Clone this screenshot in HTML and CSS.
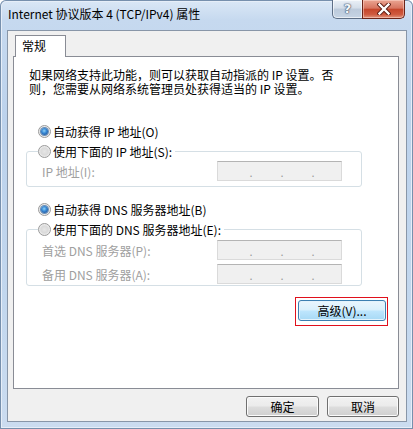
FILE: index.html
```html
<!DOCTYPE html>
<html lang="zh-CN">
<head>
<meta charset="utf-8">
<title>Internet 协议版本 4 (TCP/IPv4) 属性</title>
<link rel="stylesheet" href="styles.css">
</head>
<body>
<div class="window">
  <div class="titlebar">
    <div class="title">Internet 协议版本 4 (TCP/IPv4) 属性</div>
    <div class="caption-buttons">
      <div class="cbtn help"><span>?</span></div>
      <div class="cbtn close">
        <svg width="14" height="12" viewBox="0 0 14 12">
          <path d="M2.5 1.5 L11.5 10.5 M11.5 1.5 L2.5 10.5" stroke="#5a1a10" stroke-width="4.2" stroke-linecap="square" fill="none"/>
          <path d="M2.5 1.5 L11.5 10.5 M11.5 1.5 L2.5 10.5" stroke="#ffffff" stroke-width="2.4" stroke-linecap="square" fill="none"/>
        </svg>
      </div>
    </div>
  </div>
  <div class="client">
    <div class="tabs"><div class="tab">常规</div></div>
    <div class="panel">
      <p class="intro">如果网络支持此功能，则可以获取自动指派的 IP 设置。否<br>则，您需要从网络系统管理员处获得适当的 IP 设置。</p>

      <div class="radio-row row-auto-ip"><span class="radio checked"></span><span>自动获得 IP 地址(O)</span></div>
      <fieldset class="group group-ip">
        <legend><span class="radio"></span><span>使用下面的 IP 地址(S):</span></legend>
        <div class="field-row first"><span class="flabel">IP 地址(I):</span><div class="ipbox"><span class="dot">.</span><span class="dot">.</span><span class="dot">.</span></div></div>
      </fieldset>

      <div class="radio-row row-auto-dns"><span class="radio checked"></span><span>自动获得 DNS 服务器地址(B)</span></div>
      <fieldset class="group group-dns">
        <legend><span class="radio"></span><span>使用下面的 DNS 服务器地址(E):</span></legend>
        <div class="field-row first"><span class="flabel">首选 DNS 服务器(P):</span><div class="ipbox"><span class="dot">.</span><span class="dot">.</span><span class="dot">.</span></div></div>
        <div class="field-row second"><span class="flabel">备用 DNS 服务器(A):</span><div class="ipbox"><span class="dot">.</span><span class="dot">.</span><span class="dot">.</span></div></div>
      </fieldset>

      <div class="adv-row"><div class="highlight"><div class="btn btn-default adv">高级(V)...</div></div></div>
    </div>
    <div class="footer">
      <div class="btn ok">确定</div>
      <div class="btn cancel">取消</div>
    </div>
  </div>
</div>
</body>
</html>
```
FILE: styles.css
```css
* { box-sizing: border-box; }
html, body { margin: 0; padding: 0; }
body {
  width: 413px;
  height: 429px;
  overflow: hidden;
  background: #ffffff;
  font-family: "Noto Sans CJK SC", "Noto Sans", sans-serif;
  font-size: 12px;
  color: #000;
}
.window {
  width: 413px;
  height: 429px;
  padding: 0 6px 7px 7px;
  border-radius: 6px 6px 0 0;
  background: linear-gradient(180deg, #dbe8f6 0px, #c6d9ef 20px, #bcd2ec 120px, #c2d7ee 300px, #cbdcf0 429px);
  box-shadow: inset 0 0 0 1px #7790ad, inset 0 0 0 2px #e6eef8;
  display: flex;
  flex-direction: column;
}
.titlebar {
  height: 30px;
  display: flex;
  justify-content: space-between;
  align-items: flex-start;
}
.title {
  margin-left: 1px;
  padding-top: 6px;
  line-height: 16px;
  font-size: 12px;
  color: #000;
}
.caption-buttons {
  display: flex;
  margin-right: 2px;
}
.cbtn {
  height: 19px;
  display: flex;
  align-items: center;
  justify-content: center;
  border: 1px solid #5e6f86;
  border-top: none;
}
.help {
  width: 30px;
  border-right: none;
  border-radius: 0 0 0 5px;
  background: linear-gradient(180deg, #eaf0f7 0%, #d4dee9 45%, #bccadb 50%, #c6d4e4 100%);
  box-shadow: inset 0 0 0 1px rgba(255,255,255,0.6);
}
.help span {
  font-family: "DejaVu Sans", sans-serif;
  font-weight: bold;
  font-size: 13px;
  color: #f4f7fb;
  text-shadow: 0 0 1px #44556b, 0 0 1px #44556b, 0 0 2px #44556b;
  line-height: 16px;
}
.close {
  width: 43px;
  border-radius: 0 0 5px 0;
  border-color: #6b2418;
  background: linear-gradient(180deg, #eaa592 0%, #d77560 45%, #c5462b 52%, #cf5a3f 80%, #e0957e 100%);
  box-shadow: inset 0 0 0 1px rgba(255,220,210,0.5);
}
.client {
  width: 400px;
  height: 392px;
  border: 1px solid #8896a8;
  background: #f0f0f0;
  padding: 4px 7px 0 5px;
  display: flex;
  flex-direction: column;
}
.tabs {
  display: flex;
  padding-left: 2px;
}
.tab {
  position: relative;
  z-index: 1;
  width: 51px;
  height: 22px;
  margin-bottom: -1px;
  border: 1px solid #898c95;
  border-bottom: none;
  background: #fff;
  padding-left: 6px;
  line-height: 20px;
}
.panel {
  width: 386px;
  height: 333px;
  border: 1px solid #898c95;
  background: #fff;
  padding-left: 12px;
  display: flex;
  flex-direction: column;
}
.intro {
  margin: 11px 0 0 3px;
  line-height: 14px;
  font-size: 12px;
}
.radio-row {
  display: flex;
  align-items: center;
  gap: 2px;
  height: 16px;
  margin-left: 12px;
}
.row-auto-ip { margin-top: 27px; }
.row-auto-dns { margin-top: 14px; }
.radio {
  position: relative;
  flex: none;
  width: 13px;
  height: 13px;
  border-radius: 50%;
  border: 1px solid #9a9a9a;
  background: radial-gradient(circle at 50% 50%, #e6e6e6 0, #dadada 45%, #f2f2f2 75%, #ffffff 100%);
}
.radio.checked::after {
  content: "";
  position: absolute;
  left: 2px;
  top: 2px;
  width: 7px;
  height: 7px;
  border-radius: 50%;
  background: radial-gradient(circle at 45% 40%, #8fd2f8 0, #3a8bd6 40%, #123f86 100%);
  box-shadow: 0 0 0 1px #6a8fb8;
}
.group {
  width: 336px;
  margin: 4px 0 0 0;
  padding: 0 0 5px 0;
  border: 1px solid #d5dfe5;
  border-radius: 3px;
  min-width: 0;
}
.group-dns { padding-bottom: 1px; }
.group legend {
  display: flex;
  align-items: center;
  gap: 2px;
  height: 16px;
  margin-left: 11px;
  padding: 0 3px 0 0;
}
.field-row {
  display: flex;
  align-items: center;
  height: 20px;
  margin-left: 15px;
}
.field-row.first { margin-top: 2px; }
.group-dns .field-row.first { margin-top: 3px; }
.field-row.second { margin-top: 4px; }
.flabel {
  width: 175px;
  color: #a0a0a0;
}
.ipbox {
  width: 125px;
  height: 20px;
  background: #f0f0f0;
  border: 1px solid #dadada;
  border-top-color: #b4b4b4;
  display: flex;
  align-items: flex-end;
  padding-left: 31px;
  gap: 27px;
  color: #9a9a9a;
  font-size: 11px;
  line-height: 15px;
}
.dot { width: 4px; text-align: center; }
.adv-row {
  display: flex;
  justify-content: flex-end;
  margin-top: 11px;
  margin-right: 10px;
}
.highlight {
  border: 1px solid #e0101c;
  padding: 2px 1px 4px 2px;
}
.btn {
  display: flex;
  align-items: center;
  justify-content: center;
  height: 21px;
  border: 1px solid #707070;
  border-radius: 3px;
  background: linear-gradient(180deg, #f2f2f2 0%, #ebebeb 48%, #dddddd 52%, #cfcfcf 100%);
  box-shadow: inset 0 0 0 1px #fbfbfb;
  font-size: 12px;
  line-height: 14px;
}
.btn-default {
  border-color: #3c7fb1;
  background: linear-gradient(180deg, #eaf6fd 0%, #d9f0fc 48%, #bee6fd 52%, #a7d9f5 100%);
  box-shadow: inset 0 0 0 1px #e4f3fc;
}
.adv { width: 88px; }
.footer {
  display: flex;
  justify-content: flex-end;
  gap: 8px;
  margin-top: 7px;
}
.ok { width: 73px; }
.cancel { width: 72px; }
```
